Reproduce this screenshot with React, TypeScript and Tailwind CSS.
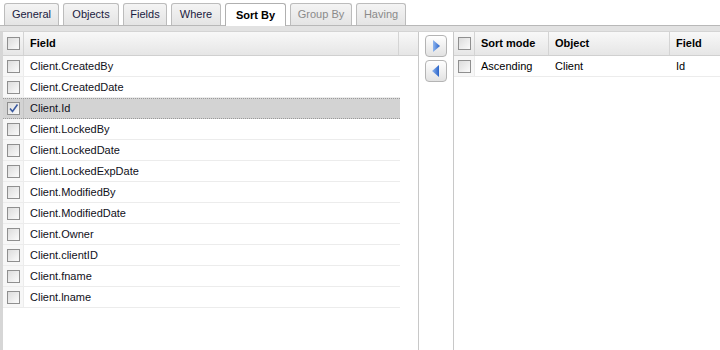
import React from "react";

const tabs: [string, string][] = [
  ["General", "w-[55px]"],
  ["Objects", "w-[56px]"],
  ["Fields", "w-[44px]"],
  ["Where", "w-[50px]"],
  ["Sort By", "w-[61px]"],
  ["Group By", "w-[62px]"],
  ["Having", "w-[50px]"],
];
const fields = [
  "Client.CreatedBy",
  "Client.CreatedDate",
  "Client.Id",
  "Client.LockedBy",
  "Client.LockedDate",
  "Client.LockedExpDate",
  "Client.ModifiedBy",
  "Client.ModifiedDate",
  "Client.Owner",
  "Client.clientID",
  "Client.fname",
  "Client.lname",
];

function Check({ checked }: { checked?: boolean }) {
  return (
    <div className="w-[13px] h-[13px] border border-[#8f8f8f] bg-gradient-to-br from-[#dcdcdc] to-[#fbfbfb] flex items-center justify-center">
      {checked && (
        <svg width="11" height="11" viewBox="0 0 11 11">
          <path d="M2 5.5 L4.5 8.5 L9.5 1.5" stroke="#3b5aa0" strokeWidth="1.6" fill="none" />
        </svg>
      )}
    </div>
  );
}

function HeaderCell({ children, className = "" }: { children?: React.ReactNode; className?: string }) {
  return (
    <div className={"h-full flex items-center border-r border-[#d4d4d4] font-bold text-[11px] text-black " + className}>
      {children}
    </div>
  );
}

export default function App() {
  return (
    <div className="w-[720px] h-[350px] bg-white overflow-hidden flex flex-col" style={{ fontFamily: "'Liberation Sans', Arial, sans-serif" }}>
      {/* tabs */}
      <div className="flex items-end gap-[4px] pl-[4px] h-[26px] border-b border-[#b8b8b8]">
        {tabs.map(([t, w]) => {
          const active = t === "Sort By";
          const disabled = t === "Group By" || t === "Having";
          return (
            <div
              key={t}
              className={
                w +
                " h-[22px] flex items-center justify-center text-[11px] rounded-t-[3px] border border-b-0 " +
                (active
                  ? "bg-white border-[#b0b0b0] font-bold text-black h-[23px] mb-[-1px]"
                  : "bg-gradient-to-b from-[#f4f4f4] to-[#e4e4e4] border-[#bcbcbc] " + (disabled ? "text-[#8a8a8a]" : "text-[#1a1a40]"))
              }
            >
              {t}
            </div>
          );
        })}
      </div>
      <div className="h-[6px] bg-[#e2e2e2] border-b border-[#d4d4d4]" />
      {/* content */}
      <div className="flex flex-1 min-h-0">
        {/* left */}
        <div className="w-[419px] border-l-[3px] border-[#d6d6d6] border-r border-r-[#c8c8c8] flex flex-col">
          <div className="h-[24px] flex bg-gradient-to-b from-[#f8f8f8] to-[#e6e6e6] border-b border-[#d0d0d0]">
            <HeaderCell className="w-[21px] justify-center">
              <Check />
            </HeaderCell>
            <HeaderCell className="w-[375px] pl-[6px]">Field</HeaderCell>
            <div className="flex-1" />
          </div>
          <div className="w-[397px]">
            {fields.map((f) => {
              const sel = f === "Client.Id";
              return (
                <div
                  key={f}
                  className={
                    "h-[21px] flex border-b " +
                    (sel ? "bg-[#d3d3d3] border-dotted border-[#9a9a9a] border-t" : "border-[#ececec]")
                  }
                >
                  <div className={"w-[21px] flex items-center justify-center border-r " + (sel ? "border-[#c4c4c4]" : "border-[#ececec] bg-[#f7f7f7]")}>
                    <Check checked={sel} />
                  </div>
                  <div className="flex-1 flex items-center pl-[6px] text-[11px] text-[#101020]">{f}</div>
                </div>
              );
            })}
          </div>
        </div>
        {/* middle */}
        <div className="w-[35px] border-r border-[#c8c8c8] flex flex-col items-center pt-[3px] gap-[3px]">
          {[true, false].map((right, i) => (
            <div
              key={i}
              className="w-[22px] h-[22px] rounded-[4px] border border-[#b4b4b4] bg-gradient-to-b from-white to-[#e2e2e2] flex items-center justify-center"
            >
              <svg width="10" height="14" viewBox="0 0 10 14">
                <defs>
                  <linearGradient id={"g" + i} x1="0" y1="0" x2="1" y2="0">
                    <stop offset="0" stopColor="#8fb6f0" />
                    <stop offset="1" stopColor="#2a63c8" />
                  </linearGradient>
                </defs>
                {right ? (
                  <path d="M2 1 L9 7 L2 13 Z" fill={"url(#g" + i + ")"} />
                ) : (
                  <path d="M8 1 L1 7 L8 13 Z" fill={"url(#g" + i + ")"} />
                )}
              </svg>
            </div>
          ))}
        </div>
        {/* right */}
        <div className="flex-1 flex flex-col">
          <div className="h-[24px] flex bg-gradient-to-b from-[#f8f8f8] to-[#e6e6e6] border-b border-[#d0d0d0]">
            <HeaderCell className="w-[21px] justify-center">
              <Check />
            </HeaderCell>
            <HeaderCell className="w-[74px] pl-[6px]">Sort mode</HeaderCell>
            <HeaderCell className="w-[121px] pl-[6px]">Object</HeaderCell>
            <div className="flex-1 flex items-center pl-[6px] font-bold text-[11px]">Field</div>
          </div>
          <div className="h-[21px] flex border-b border-[#ececec]">
            <div className="w-[21px] flex items-center justify-center border-r border-[#ececec] bg-[#f7f7f7]">
              <Check />
            </div>
            <div className="w-[74px] flex items-center pl-[6px] text-[11px]">Ascending</div>
            <div className="w-[121px] flex items-center pl-[6px] text-[11px]">Client</div>
            <div className="flex-1 flex items-center pl-[6px] text-[11px]">Id</div>
          </div>
        </div>
      </div>
    </div>
  );
}
